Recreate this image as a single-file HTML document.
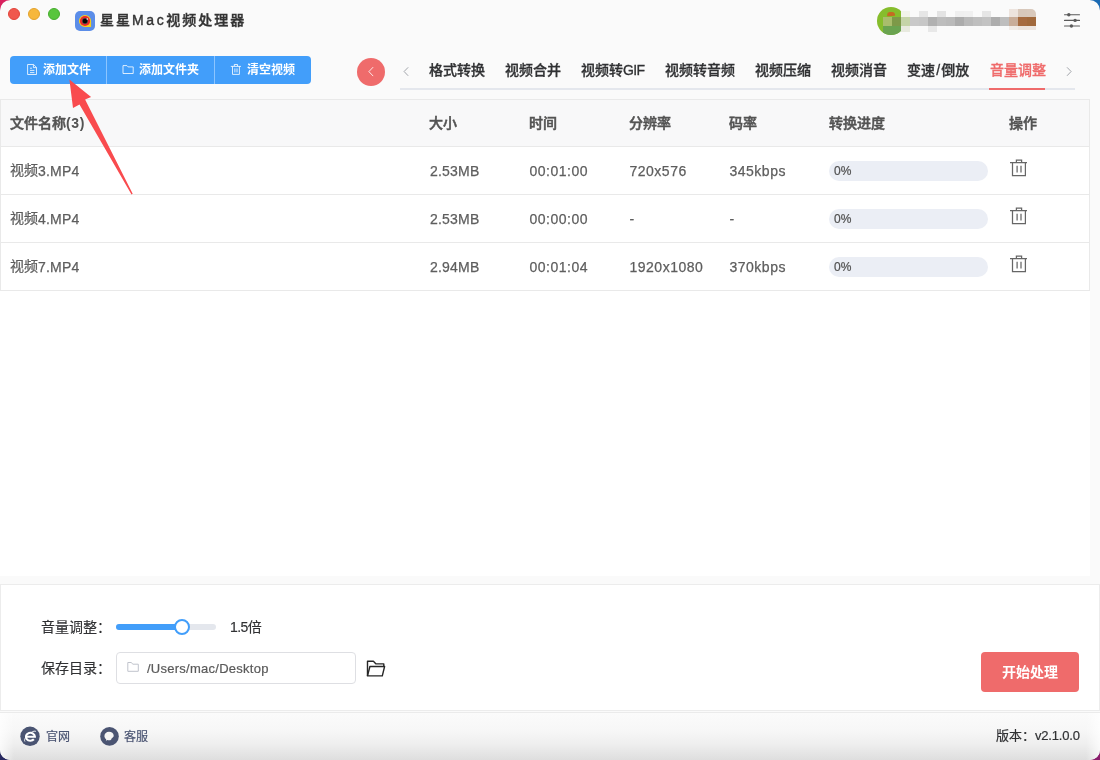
<!DOCTYPE html>
<html lang="zh-CN">
<head>
<meta charset="utf-8">
<title>星星Mac视频处理器</title>
<style>
*{box-sizing:border-box;margin:0;padding:0}
html,body{width:1100px;height:760px;overflow:hidden}
body{font-family:"Liberation Sans","Noto Sans CJK SC",sans-serif;font-size:14px;color:#606266;position:relative;
 background:#fafafa}
.abs{position:absolute}
.cnr{position:absolute;width:14px;height:14px}
#win{position:absolute;left:0;top:0;width:1100px;height:760px;background:#fafafa;border-radius:10.5px;overflow:hidden;will-change:transform}
.tl{position:absolute;top:8px;width:12px;height:12px;border-radius:50%}
#title{position:absolute;left:100px;top:9px;height:22px;line-height:22px;font-size:14px;letter-spacing:2px;color:#333;font-weight:500;white-space:nowrap;-webkit-text-stroke:0.4px currentColor}
#title span{letter-spacing:2.6px}
#appicon{position:absolute;left:75px;top:11px;width:20px;height:20px}
#user{position:absolute;left:877px;top:6px;width:170px;height:30px}
#user{overflow:hidden}
#user b{position:absolute;left:0;top:1px;width:28px;height:28px;border-radius:50%;background:#86bd2c;clip-path:polygon(0 0,28px 0,28px 10px,24px 10px,24px 28px,0 28px);overflow:hidden}
#user b i{display:block}
#user u{position:absolute;left:9.5px;top:6.2px;width:8px;height:3.6px;border-radius:5px 5px 1px 1px;background:#c46a22;transform:rotate(-6deg)}
#user i{position:absolute;width:9px;height:9px}
/* toolbar */
.btn{position:absolute;top:56px;height:28px;background:#429efa;color:#fff;font-size:12px;font-weight:700;line-height:28px;white-space:nowrap}
.btn span{position:absolute;top:0}
.btn svg{position:absolute}
#back{position:absolute;left:357px;top:58px;width:28px;height:28px;border-radius:50%;background:#ef6b6b}
/* tabs */
#tabline{position:absolute;left:400px;top:88px;width:675px;height:2px;background:#e4e7ed}
#tabact{position:absolute;left:989px;top:88px;width:56px;height:2px;background:#ef6b6b}
.tab{position:absolute;top:59px;height:22px;line-height:22px;font-size:14px;font-weight:500;color:#303133;white-space:nowrap;-webkit-text-stroke:0.3px currentColor}
.tab.on{color:#ef6b6b}
/* table */
#main{position:absolute;left:0;top:99px;width:1090px;height:477px;background:#fff}
#table{position:absolute;left:0;top:0;width:1090px;height:192px;border:1px solid #e9e9e9}
#thead{position:absolute;left:0;top:0;width:1088px;height:47px;background:#f8f8f9;border-bottom:1px solid #e9e9e9}
.row{position:absolute;left:0;width:1088px;height:48px;border-bottom:1px solid #e9e9e9}
.th{position:absolute;top:13px;height:20px;line-height:20px;font-size:14px;font-weight:500;-webkit-text-stroke:0.5px currentColor;color:#535353;white-space:nowrap;margin-left:-1px}
.td{position:absolute;top:14px;height:20px;line-height:20px;font-size:14px;color:#5e5e5e;-webkit-text-stroke:0.25px currentColor;white-space:nowrap;margin-left:-1px}
.td.n{letter-spacing:0.5px;margin-left:-0.5px}
.td.m{letter-spacing:0.2px;margin-left:0}
.td.c{top:13px}
.td.c span{position:relative;top:1px;letter-spacing:0.2px}
.prog{position:absolute;left:828px;top:14px;width:159px;height:20px;border-radius:10px;background:#ebeef5}
.prog span{position:absolute;left:5px;top:0;line-height:20px;font-size:12px;color:#505050;letter-spacing:0.2px;-webkit-text-stroke:0.2px currentColor}
.trash{position:absolute;left:1008.4px;top:10.800px;width:18px;height:20px}
/* bottom panel */
#panel{position:absolute;left:0;top:584px;width:1100px;height:127px;background:#fff;border:1px solid #ececec}
.lbl{position:absolute;left:41px;height:20px;line-height:20px;font-size:14px;color:#303133;white-space:nowrap;-webkit-text-stroke:0.15px currentColor}
#track{position:absolute;left:116px;top:624px;width:100px;height:6px;border-radius:3px;background:#e4e7ed}
#fill{position:absolute;left:116px;top:624px;width:66px;height:6px;border-radius:3px 0 0 3px;background:#429efa}
#knob{position:absolute;left:174px;top:619px;width:16px;height:16px;border-radius:50%;background:#fff;border:2px solid #429efa}
#input{position:absolute;left:116px;top:652px;width:240px;height:32px;border:1px solid #dedfe3;border-radius:4px;background:#fff}
#path{position:absolute;left:147px;top:659px;height:20px;line-height:20px;font-size:13px;color:#5a5a5a;white-space:nowrap;letter-spacing:0.26px;-webkit-text-stroke:0.2px currentColor}
#start{position:absolute;left:981px;top:652px;width:98px;height:40px;border-radius:4px;background:#ef6b6b;color:#fff;font-size:14px;font-weight:700;line-height:40px;text-align:center}
/* footer */
#footer{position:absolute;left:0;top:712px;width:1100px;height:48px;background:linear-gradient(to bottom,#fbfbfb 0,#f7f7f7 35%,#efefef 65%,#dedede 100%);border-top:1px solid #ebebeb}
.ft{position:absolute;top:726.5px;height:20px;line-height:20px;font-size:12px;color:#4a5472;white-space:nowrap;-webkit-text-stroke:0.2px currentColor}
#ver{position:absolute;left:996px;top:726px;height:20px;line-height:20px;font-size:13px;color:#303133;white-space:nowrap;-webkit-text-stroke:0.2px currentColor}
</style>
</head>
<body>
<div class="cnr" style="left:0;top:0;background:#d8215e"></div><div class="cnr" style="right:0;top:0;background:#1a6ab3"></div><div class="cnr" style="left:0;bottom:0;background:#27285f"></div><div class="cnr" style="right:0;bottom:0;background:#8a1c6c"></div>
<div id="win">
  <!-- title bar -->
  <div class="tl" style="left:8px;background:#f0584e;border:1px solid #e2443a"></div>
  <div class="tl" style="left:28px;background:#f6b73c;border:1px solid #e3a22c"></div>
  <div class="tl" style="left:48px;background:#58c53d;border:1px solid #46ad2e"></div>
  <svg id="appicon" viewBox="0 0 20 20">
    <rect x="0" y="0" width="20" height="20" rx="5" fill="#5b8de8"/>
    <path d="M10 3.900a6.100 6.100 0 0 1 6.100 6.100v6.100h-6.100a6.100 6.100 0 0 1 0-12.200z" fill="#f5cf1c"/>
    <circle cx="10" cy="10" r="5.100" fill="#e9282c"/>
    <circle cx="10" cy="10" r="2.900" fill="#3c4a46"/>
    <circle cx="10" cy="10" r="2.300" fill="#050505"/>
    <circle cx="12.300" cy="8" r="0.800" fill="#fff"/>
  </svg>
  <div id="title">星星<span>Mac</span>视频处理器</div>
  <div id="user"><b><i style="left:6px;top:19px;width:18px;height:9px;background:#6aa350"></i></b><u></u><i style="left:6px;top:11px;background:#a9bd6c"></i><i style="left:15px;top:11px;background:#7d9948"></i><i style="left:24px;top:11px;background:#c5d4a8"></i><i style="left:33px;top:11px;background:#c9c9c9"></i><i style="left:42px;top:11px;background:#c7c7c7"></i><i style="left:51px;top:11px;background:#b1b1b1"></i><i style="left:60px;top:11px;background:#bdbdbd"></i><i style="left:69px;top:11px;background:#bababa"></i><i style="left:78px;top:11px;background:#acacac"></i><i style="left:87px;top:11px;background:#b9b9b9"></i><i style="left:96px;top:11px;background:#bfbfbf"></i><i style="left:105px;top:11px;background:#c3c3c3"></i><i style="left:114px;top:11px;background:#adadad"></i><i style="left:123px;top:11px;background:#bebebe"></i><i style="left:132px;top:11px;background:#c9ad99"></i><i style="left:141px;top:11px;background:#a66b40"></i><i style="left:150px;top:11px;background:#a1693c"></i><i style="left:24px;top:5px;height:6px;background:#f2f4ea"></i><i style="left:42px;top:5px;height:6px;background:#e6e6e6"></i><i style="left:60px;top:5px;height:6px;background:#e3e3e3"></i><i style="left:78px;top:5px;height:6px;background:#efefef"></i><i style="left:87px;top:5px;height:6px;background:#f0f0f0"></i><i style="left:105px;top:5px;height:6px;background:#e6e6e6"></i><i style="left:132px;top:3px;height:8px;background:#ede4de"></i><i style="left:141px;top:3px;height:8px;background:#d8c8bb"></i><i style="left:150px;top:3px;height:8px;background:#d9c9bc;border-radius:0 5px 0 0"></i><i style="left:24px;top:20px;height:6px;background:#e8eadf"></i><i style="left:51px;top:20px;height:6px;background:#e8e8e8"></i><i style="left:132px;top:20px;height:4px;background:#f1ebe6"></i><i style="left:141px;top:20px;height:4px;background:#ece4de"></i><i style="left:150px;top:20px;height:4px;background:#ede5df"></i></div>
  <svg class="abs" style="left:1063px;top:11px" width="18" height="18" viewBox="0 0 18 18">
    <g stroke="#5a5a5a" stroke-width="1.1" fill="none" stroke-linecap="round">
      <path d="M1.5 3.7h15M1.5 9.4h15M1.5 15h15"/>
    </g>
    <circle cx="5.8" cy="3.7" r="1.7" fill="#5a5a5a"/>
    <circle cx="12.1" cy="9.4" r="1.7" fill="#5a5a5a"/>
    <circle cx="8.4" cy="15" r="1.7" fill="#5a5a5a"/>
  </svg>

  <!-- toolbar -->
  <div class="btn" style="left:10px;width:96px;border-radius:4px 0 0 4px"><svg style="left:16px;top:7px" width="13" height="13" viewBox="0 0 13 13"><g fill="none" stroke="#fff" stroke-opacity=".9" stroke-width="0.9"><path d="M1.6 1.5h6l2.9 2.9v7.1h-8.9z"/><path d="M7.4 1.6v3h3M4 5.2h2M4 7.4h4.4M4 9.6h4.4"/></g></svg><span style="left:33px">添加文件</span></div>
  <div class="btn" style="left:107px;width:107px"><svg style="left:15px;top:8px" width="13" height="12" viewBox="0 0 13 12"><path d="M1 1.6h3.9l1.2 1.3h5.1v6.6h-10.2z" fill="none" stroke="#fff" stroke-opacity=".9" stroke-width="0.9"/></svg><span style="left:32px">添加文件夹</span></div>
  <div class="btn" style="left:215px;width:96px;border-radius:0 4px 4px 0"><svg style="left:15px;top:7px" width="12" height="13" viewBox="0 0 12 13"><g fill="none" stroke="#fff" stroke-opacity=".9" stroke-width="0.9"><path d="M0.8 3.4h10.2M2.5 3.4v8h6.9v-8M4.3 3.2v-1.7h3.2v1.7"/><path d="M4.9 5.4v4M7 5.4v4" stroke-width="0.9"/></g></svg><span style="left:32px">清空视频</span></div>
  <div class="abs" style="left:106px;top:56px;width:1px;height:28px;background:#8cc5ff"></div>
  <div class="abs" style="left:214px;top:56px;width:1px;height:28px;background:#8cc5ff"></div>

  <div id="back"></div>
  <svg class="abs" style="left:357px;top:58px" width="28" height="28" viewBox="0 0 28 28"><path d="M15.900 9.400L11.900 13.600l4 4.200" stroke="#fff" stroke-opacity=".88" stroke-width="0.95" fill="none" stroke-linecap="round" stroke-linejoin="round"/></svg>

  <!-- tabs -->
  <svg class="abs" style="left:400px;top:64px" width="12" height="16" viewBox="0 0 12 16"><path d="M7.900 3.600L4.100 7.500l3.800 4" stroke="#a2a5ab" stroke-width="1" fill="none" stroke-linecap="round" stroke-linejoin="round"/></svg>
  <svg class="abs" style="left:1063px;top:64px" width="12" height="16" viewBox="0 0 12 16"><path d="M4.300 3.600L8.100 7.500l-3.800 4" stroke="#a2a5ab" stroke-width="1" fill="none" stroke-linecap="round" stroke-linejoin="round"/></svg>
  <div id="tabline"></div><div id="tabact"></div>
  <div class="tab" style="left:429px">格式转换</div>
  <div class="tab" style="left:505px">视频合并</div>
  <div class="tab" style="left:581px">视频转<span style="letter-spacing:-0.7px">GIF</span></div>
  <div class="tab" style="left:665px">视频转音频</div>
  <div class="tab" style="left:755px">视频压缩</div>
  <div class="tab" style="left:831px">视频消音</div>
  <div class="tab" style="left:907px">变速<span style="padding:0 1.2px">/</span>倒放</div>
  <div class="tab on" style="left:990px">音量调整</div>

  <!-- table -->
  <div id="main">
    <div id="table">
      <div id="thead">
        <div class="th" style="left:10px">文件名称<span style="letter-spacing:0.6px;font-weight:700;-webkit-text-stroke:0">(3)</span></div>
        <div class="th" style="left:429px">大小</div>
        <div class="th" style="left:529px">时间</div>
        <div class="th" style="left:629px">分辨率</div>
        <div class="th" style="left:729px">码率</div>
        <div class="th" style="left:829px">转换进度</div>
        <div class="th" style="left:1009px">操作</div>
      </div>
      <div class="row" style="top:47px">
        <div class="td c" style="left:10px">视频<span>3.MP4</span></div>
        <div class="td m" style="left:429px">2.53MB</div>
        <div class="td n" style="left:529px">00:01:00</div>
        <div class="td n" style="left:629px">720x576</div>
        <div class="td n" style="left:729px">345kbps</div>
        <div class="prog"><span>0%</span></div>
        <svg class="trash" viewBox="0 0 18 20"><g fill="none" stroke="#666" stroke-width="1.25"><path d="M1 4.6h17M3.5 4.6v13h12.9v-13M7.4 4.4v-2.300h5.200v2.300"/><path d="M8.100 7.800v6.600M12 7.800v6.600"/></g></svg>
      </div>
      <div class="row" style="top:95px">
        <div class="td c" style="left:10px">视频<span>4.MP4</span></div>
        <div class="td m" style="left:429px">2.53MB</div>
        <div class="td n" style="left:529px">00:00:00</div>
        <div class="td n" style="left:629px">-</div>
        <div class="td n" style="left:729px">-</div>
        <div class="prog"><span>0%</span></div>
        <svg class="trash" viewBox="0 0 18 20"><g fill="none" stroke="#666" stroke-width="1.25"><path d="M1 4.6h17M3.5 4.6v13h12.9v-13M7.4 4.4v-2.300h5.200v2.300"/><path d="M8.100 7.800v6.600M12 7.800v6.600"/></g></svg>
      </div>
      <div class="row" style="top:143px">
        <div class="td c" style="left:10px">视频<span>7.MP4</span></div>
        <div class="td m" style="left:429px">2.94MB</div>
        <div class="td n" style="left:529px">00:01:04</div>
        <div class="td n" style="left:629px">1920x1080</div>
        <div class="td n" style="left:729px">370kbps</div>
        <div class="prog"><span>0%</span></div>
        <svg class="trash" viewBox="0 0 18 20"><g fill="none" stroke="#666" stroke-width="1.25"><path d="M1 4.6h17M3.5 4.6v13h12.9v-13M7.4 4.4v-2.300h5.200v2.300"/><path d="M8.100 7.800v6.600M12 7.800v6.600"/></g></svg>
      </div>
    </div>
  </div>

  <!-- arrow annotation -->
  <svg class="abs" style="left:0;top:0;pointer-events:none" width="1100" height="760" viewBox="0 0 1100 760">
    <polygon points="69.4,79.6 91.1,96.9 85.1,99.6 132.7,193.7 131.500,194.400 79.5,104.4 73,108" fill="#f94b4e"/>
  </svg>

  <!-- bottom panel -->
  <div id="panel"></div>
  <div class="lbl" style="top:617px">音量调整：</div>
  <div id="track"></div><div id="fill"></div><div id="knob"></div>
  <div class="lbl" style="left:230px;top:617px"><span style="letter-spacing:-0.6px">1.5</span>倍</div>
  <div class="lbl" style="top:658px">保存目录：</div>
  <div id="input"></div>
  <svg class="abs" style="left:126px;top:661px" width="14" height="12" viewBox="0 0 14 12"><path d="M1.8 1.5h3.6l1.3 1.7h5.6v7.1h-10.5z" fill="none" stroke="#c0c4cc" stroke-width="1"/></svg>
  <svg class="abs" style="left:365px;top:659px" width="22" height="20" viewBox="0 0 22 20"><g fill="none" stroke="#262626" stroke-width="1.4" stroke-linejoin="round"><path d="M2.500 16.900V2.200H8.400L11 4.900H18.800V7.300"/><path d="M2.500 16.900L4.900 7.500H19.600L17.300 16.900Z"/></g></svg>
  <div id="path">/Users/mac/Desktop</div>
  <div id="start">开始处理</div>

  <!-- footer -->
  <div id="footer"></div>
  <div class="abs" style="left:0;top:713px;width:1100px;height:47px;background:linear-gradient(to right,rgba(255,255,255,.75) 0,rgba(255,255,255,0) 14px,rgba(255,255,255,0) 1086px,rgba(255,255,255,.75) 1100px)"></div>
  <svg class="abs" style="left:20px;top:726px" width="20" height="21" viewBox="0 0 20 21"><circle cx="10" cy="10.300" r="9.700" fill="#4a5472"/><path d="M6.300 10.700H14.900A4.500 4 0 1 0 13.900 13.300" fill="none" stroke="#fff" stroke-width="2.100"/><path d="M16 5.600c-.8-1-2.900-.4-4.700.8M4.900 15.500c-.9-1-.2-2.900 1.500-4.800" stroke="#fff" stroke-width="1" fill="none" opacity=".9"/></svg>
  <svg class="abs" style="left:99.800px;top:726px" width="20" height="21" viewBox="0 0 20 21"><circle cx="9.500" cy="10.400" r="9.300" fill="#4a5472"/><path d="M9 5.700c2.600 0 4.700 1.700 4.700 3.900 0 .4-.1.800-.2 1.100l-2.100 2c-.2 1-.6 1.300-1.200 1.500-.4.100-.8.100-1.200.1-.6 0-1.100-.1-1.600-.2l-1.500.7.300-1.500c-1.100-.8-1.800-2-1.800-3.300 0-2.400 2.100-4.300 4.600-4.300z" fill="#f4f4f4"/></svg>
  <div class="ft" style="left:46px">官网</div>
  <div class="ft" style="left:124px">客服</div>
  <div id="ver">版本：<span style="letter-spacing:-0.2px">v2.1.0.0</span></div>
</div>
</body>
</html>
